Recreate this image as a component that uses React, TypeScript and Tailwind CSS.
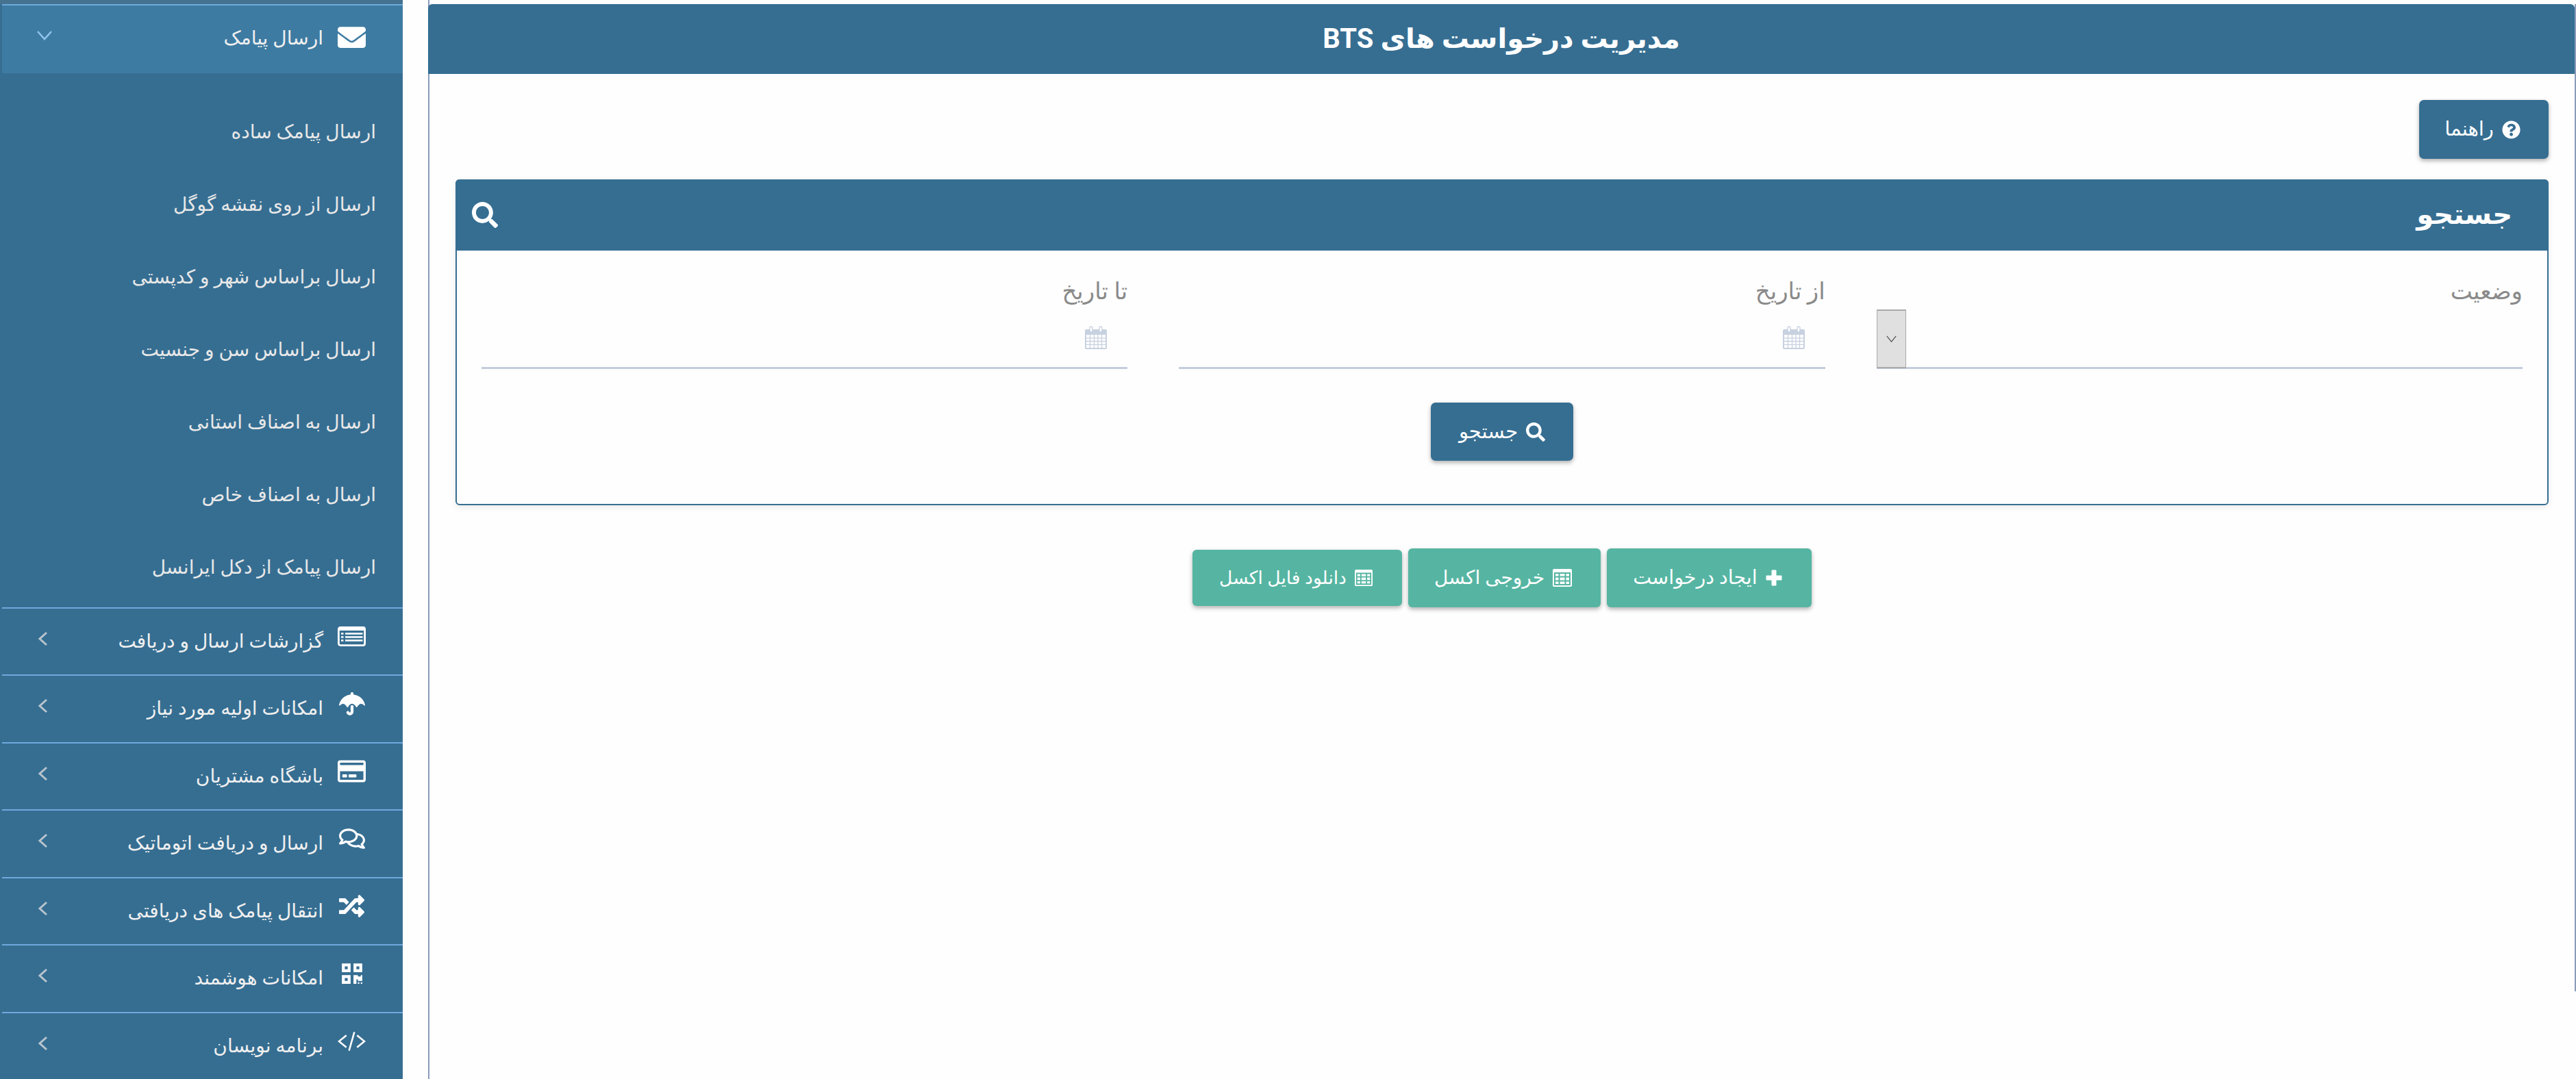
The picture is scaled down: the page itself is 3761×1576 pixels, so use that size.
import React from "react";
import { FaEnvelope, FaUmbrella, FaRegCreditCard, FaRegComments, FaRandom, FaQrcode, FaSearch, FaQuestionCircle } from "react-icons/fa";

const ListAlt = () => (
  <svg viewBox="0 0 41 29" className="h-[29px] w-[41px]" fill="none">
    <rect x="1.4" y="1.4" width="38.2" height="26.2" rx="2.5" stroke="white" strokeWidth="2.8" />
    <rect x="1" y="1" width="39" height="5" rx="2" fill="white" />
    <path d="M5 10.5h3.5M5 15.5h3.5M5 20.5h3.5M11 10.5h25.5M11 15.5h25.5M11 20.5h25.5" stroke="white" strokeWidth="2.6" />
  </svg>
);
const Code = () => (
  <svg viewBox="0 0 42 30" className="h-[30px] w-[42px]" fill="none" stroke="white" strokeWidth="2.6">
    <path d="M13 6 2 15l11 9M29 6l11 9-11 9M25 1l-8 28" />
  </svg>
);
const ChevLeft = () => (
  <svg viewBox="0 0 15 22" className="h-[22px] w-[15px]" fill="none" stroke="#b8c4cd" strokeWidth="3">
    <path d="M13 2 3 11l10 9" />
  </svg>
);
const ChevDown = () => (
  <svg viewBox="0 0 24 16" className="h-[16px] w-[24px]" fill="none" stroke="#8fc3ec" strokeWidth="2.6">
    <path d="M2 2l10 11L22 2" />
  </svg>
);
const Calendar = () => (
  <svg viewBox="0 0 34 35" className="h-[35px] w-[34px]" fill="none">
    <rect x="1" y="5" width="32" height="29" rx="2" fill="#c8d1e0" />
    <rect x="8" y="1" width="4" height="8" rx="2" fill="#fff" stroke="#c8d1e0" strokeWidth="1.4" />
    <rect x="22" y="1" width="4" height="8" rx="2" fill="#fff" stroke="#c8d1e0" strokeWidth="1.4" />
    <rect x="3" y="13" width="28" height="19" fill="#fff" />
    <path d="M8.5 13v19M14.5 13v19M20 13v19M25.5 13v19M3 17.8h28M3 22.5h28M3 27.3h28" stroke="#c8d1e0" strokeWidth="1.3" />
  </svg>
);
const TableIcon = ({ className }: { className: string }) => (
  <svg viewBox="0 0 28 28" className={className} fill="none">
    <rect x="0" y="1" width="28" height="26" rx="2" fill="white" />
    <path d="M9.5 7v17M18.5 7v17M3 12.5h22M3 18.5h22M3 7h22v17H3z" stroke="#55b5a2" strokeWidth="2" />
  </svg>
);
const PlusIcon = () => (
  <svg viewBox="0 0 24 24" className="h-[24px] w-[24px]" fill="white">
    <path d="M8.5 1.5a1 1 0 0 1 1-1h5a1 1 0 0 1 1 1v7h7a1 1 0 0 1 1 1v5a1 1 0 0 1-1 1h-7v7a1 1 0 0 1-1 1h-5a1 1 0 0 1-1-1v-7h-7a1 1 0 0 1-1-1v-5a1 1 0 0 1 1-1h7z" />
  </svg>
);

const subs = [
  "ارسال پیامک ساده",
  "ارسال از روی نقشه گوگل",
  "ارسال براساس شهر و کدپستی",
  "ارسال براساس سن و جنسیت",
  "ارسال به اصناف استانی",
  "ارسال به اصناف خاص",
  "ارسال پیامک از دکل ایرانسل",
];
const rows: [React.ReactNode, string][] = [
  [<ListAlt />, "گزارشات ارسال و دریافت"],
  [<FaUmbrella className="text-[38px] text-white" />, "امکانات اولیه مورد نیاز"],
  [<FaRegCreditCard className="text-[43px] text-white" />, "باشگاه مشتریان"],
  [<FaRegComments className="text-[38px] text-white" />, "ارسال و دریافت اتوماتیک"],
  [<FaRandom className="text-[37px] text-white" />, "انتقال پیامک های دریافتی"],
  [<FaQrcode className="text-[34px] text-white" />, "امکانات هوشمند"],
  [<Code />, "برنامه نویسان"],
];

const DateField = ({ label }: { label: string }) => (
  <div className="flex flex-col">
    <div className="h-[58px] pt-[4px] text-[34px] leading-[50px] text-[#8a8a8a]">{label}</div>
    <div className="flex h-[85px] items-start border-b-[3px] border-[#c3cddb] pr-[29px] pt-[22px]">
      <Calendar />
    </div>
  </div>
);

export default function App() {
  return (
    <div dir="ltr" className="flex h-[1576px] w-[3761px] overflow-hidden bg-[#fefefe] font-['Roboto','DejaVu_Sans',sans-serif]">
      <aside dir="rtl" className="flex w-[588px] shrink-0 flex-col bg-[#366e92]">
        <div className="h-[6px] bg-[#44728f]" />
        <div className="ml-[3px] flex h-[102px] items-start border-t-2 border-[#6fa8dc] bg-[#3e7ba2] pr-[54px] pl-[50px]">
          <span className="mt-[26px] flex w-[41px] justify-center text-white"><FaEnvelope className="text-[41px]" /></span>
          <span className="mt-[26px] mr-[21px] text-[28px] leading-[44px] text-[#f0f0f0]">ارسال پیامک</span>
          <span className="mt-[36px] mr-auto"><ChevDown /></span>
        </div>
        <div className="flex flex-col pt-[33px] pb-[5px]">
          {subs.map((s) => (
            <div key={s} className="flex h-[106px] items-center pr-[39px] text-[28px] leading-[44px] text-[#e8e8e8]">{s}</div>
          ))}
        </div>
        {rows.map(([icon, label]) => (
          <div key={label} className="ml-[3px] flex h-[98.5px] shrink-0 items-start border-t-2 border-[#6fa8dc] pr-[54px] pl-[52px]">
            <span className="mt-[22px] flex h-[38px] w-[41px] items-center justify-center">{icon}</span>
            <span className="mt-[26px] mr-[21px] text-[28px] leading-[44px] text-[#f0f0f0]">{label}</span>
            <span className="mt-[33px] mr-auto"><ChevLeft /></span>
          </div>
        ))}
      </aside>

      <main dir="rtl" className="ml-[37px] flex-1 border-l-2 border-[#8a9cba]">
        <div className="mt-[6px] h-[1442px] border-r-2 border-[#8a9cba]">
          <header className="-ml-[2px] flex h-[102px] items-center justify-center rounded-t-[6px] bg-[#366e92] text-[40px] font-bold text-white">
            مدیریت درخواست های BTS
          </header>
          <div className="flex justify-start pr-[38px] pt-[38px]">
            <button className="flex h-[86px] w-[189px] items-center justify-center gap-[12px] rounded-[7px] bg-[#366e92] pr-[4px] text-[29px] text-white shadow-[0_3px_6px_rgba(0,0,0,0.3)]">
              <FaQuestionCircle className="text-[27px]" />
              راهنما
            </button>
          </div>
          <section className="mx-[38px] mt-[30px] h-[476px] rounded-[6px] border-2 border-[#366e92] shadow-[0_3px_10px_rgba(0,0,0,0.08)]">
            <div className="-m-[2px] flex h-[104px] items-center justify-between rounded-t-[6px] bg-[#366e92] pr-[53px] pl-[24px]">
              <h2 className="text-[40px] font-bold text-white">جستجو</h2>
              <FaSearch className="text-[38px] text-white" />
            </div>
            <div className="grid grid-cols-3 gap-x-[75px] px-[36px] pt-[32px]">
              <div className="flex flex-col">
                <div className="h-[58px] pt-[4px] text-[34px] leading-[50px] text-[#8a8a8a]">وضعیت</div>
                <div className="flex h-[85px] border-b-[3px] border-[#c3cddb]">
                  <div className="mr-auto -mt-[2px] flex h-[86px] w-[43px] items-center justify-center border-x border-y-2 border-[#aaaaaa] bg-[#e0e0e0]">
                    <svg viewBox="0 0 18 12" className="h-[10px] w-[17px]" fill="none" stroke="#444" strokeWidth="1.3"><path d="M1 1l8 10 8-10" /></svg>
                  </div>
                </div>
              </div>
              <DateField label="از تاریخ" />
              <DateField label="تا تاریخ" />
            </div>
            <div className="flex justify-center pt-[49px]">
              <button className="flex h-[85px] w-[208px] items-center justify-center gap-[12px] rounded-[7px] bg-[#366e92] text-[29px] text-white shadow-[0_3px_6px_rgba(0,0,0,0.3)]">
                <FaSearch className="text-[28px]" />
                جستجو
              </button>
            </div>
          </section>
          <div className="mt-[63px] flex items-center justify-center gap-[9px]">
            <button className="flex h-[86px] w-[299px] items-center justify-center gap-[12px] rounded-[6px] bg-[#55b5a2] pr-[5px] text-[28.5px] text-white shadow-[0_3px_6px_rgba(0,0,0,0.3)]">
              <PlusIcon />
              ایجاد درخواست
            </button>
            <button className="flex h-[86px] w-[281px] items-center justify-center gap-[12px] rounded-[6px] bg-[#55b5a2] pr-[4px] text-[28px] text-white shadow-[0_3px_6px_rgba(0,0,0,0.3)]">
              <TableIcon className="h-[28px] w-[28px]" />
              خروجی اکسل
            </button>
            <button className="flex h-[82px] w-[306px] items-center justify-center gap-[12px] rounded-[6px] bg-[#55b5a2] pr-[4px] text-[26.5px] text-white shadow-[0_3px_6px_rgba(0,0,0,0.3)]">
              <TableIcon className="h-[26px] w-[26px]" />
              دانلود فایل اکسل
            </button>
          </div>
        </div>
      </main>
    </div>
  );
}
